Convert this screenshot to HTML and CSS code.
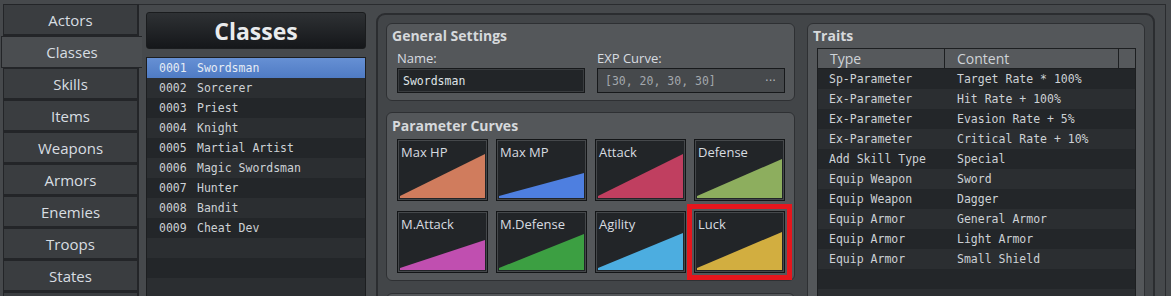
FILE: index.html
```html
<!DOCTYPE html>
<html lang="en">
<head>
<meta charset="utf-8">
<title>Database - Classes</title>
<link rel="stylesheet" href="styles.css">
</head>
<body>
<div class="app">
  <nav class="tabs">
    <div class="tab">Actors</div>
    <div class="tab active">Classes</div>
    <div class="tab">Skills</div>
    <div class="tab">Items</div>
    <div class="tab">Weapons</div>
    <div class="tab">Armors</div>
    <div class="tab">Enemies</div>
    <div class="tab">Troops</div>
    <div class="tab">States</div>
    <div class="tab"></div>
  </nav>
  <main class="pane">
    <section class="classes">
      <div class="classes-title">Classes</div>
      <div class="class-list">
        <div class="row sel"><span class="id">0001</span><span>Swordsman</span></div>
        <div class="row"><span class="id">0002</span><span>Sorcerer</span></div>
        <div class="row"><span class="id">0003</span><span>Priest</span></div>
        <div class="row"><span class="id">0004</span><span>Knight</span></div>
        <div class="row"><span class="id">0005</span><span>Martial Artist</span></div>
        <div class="row"><span class="id">0006</span><span>Magic Swordsman</span></div>
        <div class="row"><span class="id">0007</span><span>Hunter</span></div>
        <div class="row"><span class="id">0008</span><span>Bandit</span></div>
        <div class="row"><span class="id">0009</span><span>Cheat Dev</span></div>
        <div class="row"></div>
        <div class="row"></div>
        <div class="row"></div>
        <div class="row"></div>
      </div>
    </section>
    <section class="panel">
      <div class="left">
        <div class="group general">
          <div class="group-title">General Settings</div>
          <div class="fields">
            <div class="field">
              <div class="label">Name:</div>
              <div class="input name">Swordsman</div>
            </div>
            <div class="field">
              <div class="label">EXP Curve:</div>
              <div class="input exp"><span>[30, 20, 30, 30]</span><span class="dots">···</span></div>
            </div>
          </div>
        </div>
        <div class="group curves">
          <div class="group-title">Parameter Curves</div>
          <div class="tiles">
            <div class="tile" style="--t:12px;--c:#d07c5d"><div class="tri"></div><div class="tile-label">Max HP</div></div>
            <div class="tile" style="--t:31px;--c:#4e7fe0"><div class="tri"></div><div class="tile-label">Max MP</div></div>
            <div class="tile" style="--t:12px;--c:#c03f60"><div class="tri"></div><div class="tile-label">Attack</div></div>
            <div class="tile" style="--t:17px;--c:#8dae5e"><div class="tri"></div><div class="tile-label">Defense</div></div>
            <div class="tile" style="--t:26px;--c:#c04fb0"><div class="tri"></div><div class="tile-label">M.Attack</div></div>
            <div class="tile" style="--t:20px;--c:#3c9f42"><div class="tri"></div><div class="tile-label">M.Defense</div></div>
            <div class="tile" style="--t:19px;--c:#4cade0"><div class="tri"></div><div class="tile-label">Agility</div></div>
            <div class="tile hl" style="--t:18px;--c:#d2ae40"><div class="tri"></div><div class="tile-label">Luck</div></div>
          </div>
        </div>
        <div class="group rest"></div>
      </div>
      <div class="group traits">
        <div class="group-title">Traits</div>
        <div class="table">
          <div class="thead"><div>Type</div><div>Content</div><div></div></div>
          <div class="trow"><div>Sp-Parameter</div><div>Target Rate * 100%</div></div>
          <div class="trow"><div>Ex-Parameter</div><div>Hit Rate + 100%</div></div>
          <div class="trow"><div>Ex-Parameter</div><div>Evasion Rate + 5%</div></div>
          <div class="trow"><div>Ex-Parameter</div><div>Critical Rate + 10%</div></div>
          <div class="trow"><div>Add Skill Type</div><div>Special</div></div>
          <div class="trow"><div>Equip Weapon</div><div>Sword</div></div>
          <div class="trow"><div>Equip Weapon</div><div>Dagger</div></div>
          <div class="trow"><div>Equip Armor</div><div>General Armor</div></div>
          <div class="trow"><div>Equip Armor</div><div>Light Armor</div></div>
          <div class="trow"><div>Equip Armor</div><div>Small Shield</div></div>
          <div class="trow"><div></div><div></div></div>
          <div class="trow"><div></div><div></div></div>
        </div>
      </div>
    </section>
  </main>
</div>
</body>
</html>
```
FILE: styles.css
```css
* {
  box-sizing: border-box;
  margin: 0;
  padding: 0;
}

html, body {
  height: 296px;
  overflow: hidden;
}

body {
  background: #46494c;
  font-family: "Open Sans", "Noto Sans", sans-serif;
  color: #d3d7db;
}

.app {
  display: flex;
  align-items: flex-start;
  height: 340px;
}

/* ---------- left tabs ---------- */
.tabs {
  flex: none;
  width: 139px;
  padding: 4px 0 0 3px;
  display: flex;
  flex-direction: column;
}

.tab {
  height: 32px;
  width: 136px;
  border: 1px solid #232528;
  border-right-width: 2px;
  border-bottom-width: 2px;
  background: #3a3d40;
  display: flex;
  align-items: center;
  justify-content: center;
  font-size: 15px;
  color: #d8dde2;
}

.tab.active {
  background: #4a4d50;
  margin-left: -2px;
  width: 141px;
  border-right: none;
  border-bottom-width: 1px;
  position: relative;
  z-index: 1;
}

/* ---------- pane ---------- */
.pane {
  flex: none;
  width: 1027px;
  height: 330px;
  margin-top: 4px;
  border-top: 1px solid #2a2c2f;
  border-right: 1px solid #2a2c2f;
  padding: 7px 10px 0 7px;
  display: flex;
  gap: 10px;
  align-items: flex-start;
}

.classes {
  flex: none;
  width: 220px;
  display: flex;
  flex-direction: column;
}

.classes-title {
  height: 37px;
  border-radius: 3px;
  border: 1px solid #1a1c1e;
  background: linear-gradient(#2e3134, #15171a);
  font-weight: bold;
  font-size: 23px;
  color: #e9ebed;
  display: flex;
  align-items: center;
  justify-content: center;
}

.class-list {
  margin-top: 8px;
  border: 1px solid #1c1e20;
  background: #26292c;
  font-family: "DejaVu Sans Mono", monospace;
  font-size: 11.5px;
  color: #cdd1d5;
}

.row {
  height: 20px;
  display: flex;
  align-items: center;
  padding-left: 12px;
  white-space: pre;
}

.row:nth-child(odd) { background: #232629; }
.row:nth-child(even) { background: #2b2e31; }

.row.sel {
  background: linear-gradient(#6690d4, #4f7bc4);
  color: #e6ecf5;
}

.id { width: 38px; }

/* ---------- main panel ---------- */
.panel {
  flex: none;
  width: 779px;
  height: 320px;
  margin-top: 1px;
  border: 2px solid #2b2d30;
  border-radius: 9px;
  background: #424548;
  padding: 8px;
  display: flex;
  gap: 12px;
  align-items: flex-start;
}

.left {
  flex: none;
  width: 409px;
  display: flex;
  flex-direction: column;
}

.group {
  border: 1px solid #2e3033;
  border-radius: 6px;
  background: #54575a;
}

.group-title {
  font-weight: bold;
  font-size: 14px;
  line-height: 20px;
  padding: 2px 0 0 5px;
  color: #d6d9dc;
}

.fields {
  display: flex;
  gap: 12px;
  padding: 3px 9px 7px 10px;
}

.field { width: 188px; }

.label {
  font-size: 13px;
  line-height: 18px;
  margin-bottom: 1px;
  color: #d8dce0;
}

.input {
  height: 25px;
  border: 1px solid #17191b;
  display: flex;
  align-items: center;
  font-family: "DejaVu Sans Mono", monospace;
  font-size: 11.5px;
  white-space: pre;
}

.input.name {
  background: #222528;
  padding-left: 5px;
  color: #dfe3e7;
  box-shadow: inset 0 0 0 1px #3a3d40;
}

.input.exp {
  background: #46494c;
  padding: 0 8px 0 7px;
  justify-content: space-between;
  color: #a3a8ad;
}

.dots {
  font-family: "DejaVu Sans", sans-serif;
  color: #b5b9bd;
}

.curves {
  margin-top: 11px;
}

.curves .group-title { padding-top: 3px; }

.tiles {
  display: grid;
  grid-template-columns: repeat(4, 91px);
  gap: 10px 8px;
  padding: 3px 9px 7px 10px;
}

.tile {
  height: 62px;
  border: 1px solid #131517;
  background: #222528;
  box-shadow: inset 0 0 0 1px #45484b;
  padding: 2px;
  display: grid;
}

.tri, .tile-label { grid-area: 1 / 1; }

.tri {
  background: var(--c);
  clip-path: polygon(0 100%, 0 calc(100% - 2px), 100% var(--t), 100% 100%);
}

.tile-label {
  align-self: start;
  font-size: 13px;
  line-height: 20px;
  padding-left: 1px;
  color: #d8dce0;
}

.tile.hl {
  outline: 5px solid #e5161d;
  outline-offset: 2px;
}

.rest {
  margin-top: 12px;
  height: 60px;
}

/* ---------- traits ---------- */
.traits {
  flex: none;
  width: 338px;
  height: 320px;
}

.table {
  margin: 2px 8px 0 9px;
  border: 1px solid #1d1f21;
  background: #26292c;
}

.thead {
  display: grid;
  grid-template-columns: 127px 174px 1fr;
  height: 20px;
  background: #56595c;
  border-bottom: 1px solid #1d1f21;
  font-size: 14px;
  color: #cfd3d7;
}

.thead > div {
  border-right: 1px solid #1d1f21;
  padding-left: 12px;
  line-height: 19px;
}

.thead > div:last-child { border-right: none; }

.trow {
  display: grid;
  grid-template-columns: 127px 1fr;
  height: 20px;
  align-items: center;
  font-family: "DejaVu Sans Mono", monospace;
  font-size: 11.5px;
  color: #cdd1d5;
  white-space: pre;
}

.trow > div:first-child { padding-left: 11px; }
.trow > div:last-child { padding-left: 12px; }

.trow:nth-child(even) { background: #232629; }
.trow:nth-child(odd) { background: #2b2e31; }
```
